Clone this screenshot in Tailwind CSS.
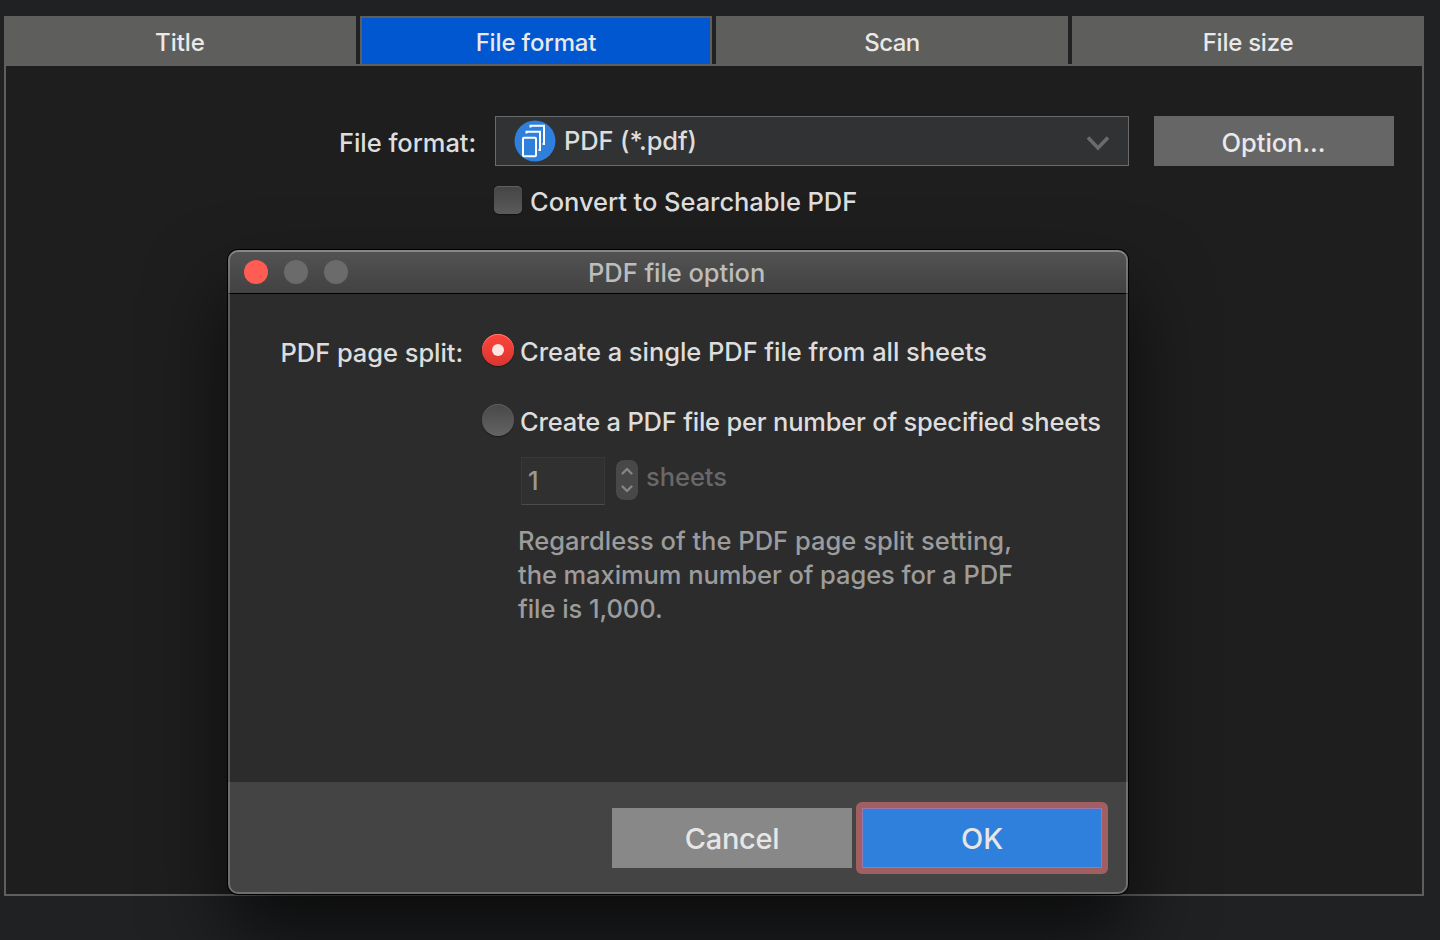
<!DOCTYPE html>
<html lang="en">
<head>
<meta charset="utf-8">
<title>File format</title>
<script src="https://cdn.jsdelivr.net/npm/@tailwindcss/browser@4"></script>
</head>
<body class="relative h-[940px] w-[1440px] overflow-hidden bg-[#202123] font-['Inter',sans-serif] text-[25.5px] font-[450] tracking-[-0.05px] whitespace-nowrap text-[#dddddd]">
<main class="ml-1 flex w-[1420px] flex-col pt-4">
  <nav class="grid h-12 grid-cols-4 gap-1 text-[24px] text-[#e9e9e9]">
    <div class="flex items-center justify-center bg-[#5e5e5c] pt-[5px]"><span>Title</span></div>
    <div class="flex items-center justify-center border-2 border-b-0 border-[#5e5e5c] bg-[#0057d0] pt-[3px]"><span class="tracking-[-0.15px]">File format</span></div>
    <div class="flex items-center justify-center bg-[#5e5e5c] pt-[5px]"><span class="tracking-[-0.6px]">Scan</span></div>
    <div class="flex items-center justify-center bg-[#5e5e5c] pt-[5px]"><span class="tracking-[-0.25px]">File size</span></div>
  </nav>
  <section class="h-[832px] border-2 border-[#5e5e5c] bg-[#1e1e1e] pt-[50px]">
    <div class="flex h-[50px]">
      <div class="w-[489px] pt-[2px] pl-[333px] leading-[50px]"><span>File format:</span></div>
      <div class="flex w-[634px] border border-[#6a6a6a] bg-[#313234] pl-[17.5px]">
        <svg class="mt-[2.5px] h-[42px] w-[42px]" viewBox="0 0 42 42" fill="none">
          <circle cx="21" cy="21" r="20.5" fill="#2e80dc"/>
          <g stroke="#fff" stroke-width="2"><path d="M16.5 7.5V5.8H30V24H28.5"/><path d="M12.5 13.5V11.8H26V30H24.5"/><rect x="9" y="17.8" width="13" height="18.4" rx="1"/></g>
        </svg>
        <span class="ml-[8.5px] leading-[48px] tracking-[-0.12px]">PDF (*.pdf)</span>
        <svg class="mt-[18px] mr-[18px] ml-auto h-4 w-6" viewBox="0 0 24 16" fill="none" stroke="#6b6b6b" stroke-width="3.6"><path d="M2 2.5L12 13L22 2.5"/></svg>
      </div>
      <div class="ml-[25px] w-[240px] bg-[#666666] pt-[2px] pr-[1px] text-center leading-[50px] text-[#e9e9e9]"><span>Option...</span></div>
    </div>
    <div class="mt-5 ml-[488px] flex h-7">
      <div class="h-7 w-7 rounded-[5px] bg-linear-to-b from-[#444444] to-[#5c5c5c] shadow-[inset_0_1px_0_#606060,0_1px_1px_#111111]"></div>
      <span class="mt-[2px] ml-2 leading-[28px]">Convert to Searchable PDF</span>
    </div>
  </section>
</main>

<div class="absolute top-[250px] left-[228px] flex h-[644px] w-[900px] flex-col overflow-hidden rounded-[10px] bg-[#2c2c2c] shadow-[0_0_0_1px_#000000,0_42px_80px_0_rgba(0,0,0,0.66)]">
  <header class="flex h-11 shrink-0 items-center gap-4 border-b border-black bg-linear-to-b from-[#535353] to-[#424242] pl-4">
    <div class="h-6 w-6 rounded-full bg-[#ff5c54]"></div>
    <div class="h-6 w-6 rounded-full bg-[#6b6b6b]"></div>
    <div class="h-6 w-6 rounded-full bg-[#6b6b6b]"></div>
    <span class="ml-[224px] pt-[3px] text-[#bdbdbd]">PDF file option</span>
  </header>
  <div class="flex h-[488px] shrink-0 pl-[52px]">
    <div class="w-[202px] pt-[41px] pl-[0.5px] leading-9"><span>PDF page split:</span></div>
    <div>
      <div class="mt-[40px] flex h-8">
        <div class="flex h-8 w-8 items-center justify-center rounded-full bg-linear-to-b from-[#fd443c] to-[#d9362f] shadow-[inset_0_1px_0_#ff7a72,0_1px_1px_#1c1c1c]"><div class="h-3 w-3 rounded-full bg-[#ffe4e2]"></div></div>
        <span class="ml-1.5 pt-[2px] leading-8">Create a single PDF file from all sheets</span>
      </div>
      <div class="mt-[38px] flex h-8">
        <div class="h-8 w-8 rounded-full bg-linear-to-b from-[#484848] to-[#646464] shadow-[inset_0_1px_0_#5e5e5e,0_1px_1px_#1c1c1c]"></div>
        <span class="ml-1.5 pt-[2px] leading-8 tracking-[-0.21px]">Create a PDF file per number of specified sheets</span>
      </div>
      <div class="mt-[21px] ml-[39px] flex h-12">
        <div class="h-12 w-[84px] border border-[#383838] border-b-[#4c4c4c] bg-[#303030] pl-[6px] leading-[46px] text-[#989898]"><span>1</span></div>
        <svg class="mt-[3px] ml-[11px] h-10 w-[22px]" viewBox="0 0 22 40" fill="none"><rect width="22" height="40" rx="8" fill="#484848"/><g stroke="#858585" stroke-width="2.4" stroke-linecap="round" stroke-linejoin="round"><path d="M6.5 13.5L11 9L15.5 13.5"/><path d="M6.5 26.5L11 31L15.5 26.5"/></g></svg>
        <span class="ml-2 leading-10 text-[#686868]">sheets</span>
      </div>
      <div class="mt-[19px] ml-[36px] leading-[34px] text-[#9c9c9c]">
        <div class="tracking-[0.02px]">Regardless of the PDF page split setting,</div>
        <div class="tracking-[-0.07px]">the maximum number of pages for a PDF</div>
        <div>file is 1,000.</div>
      </div>
    </div>
  </div>
  <footer class="flex flex-1 gap-1 bg-[#444444] pt-5 pl-[384px] text-[29px] text-[#e6e6e6]">
    <div class="mt-1.5 h-[60px] w-[240px] bg-[#888888] text-center leading-[61px]"><span class="tracking-[-0.3px]">Cancel</span></div>
    <div class="h-[72px] w-[252px] rounded-md bg-[#a15f61] p-1.5"><div class="h-[60px] border border-[#9479b4] bg-[#2e80dc] text-center leading-[59px]"><span>OK</span></div></div>
  </footer>
  <div class="pointer-events-none absolute inset-0 rounded-[10px] border-2 border-white/23 border-t-white/30"></div>
</div>
</body>
</html>
